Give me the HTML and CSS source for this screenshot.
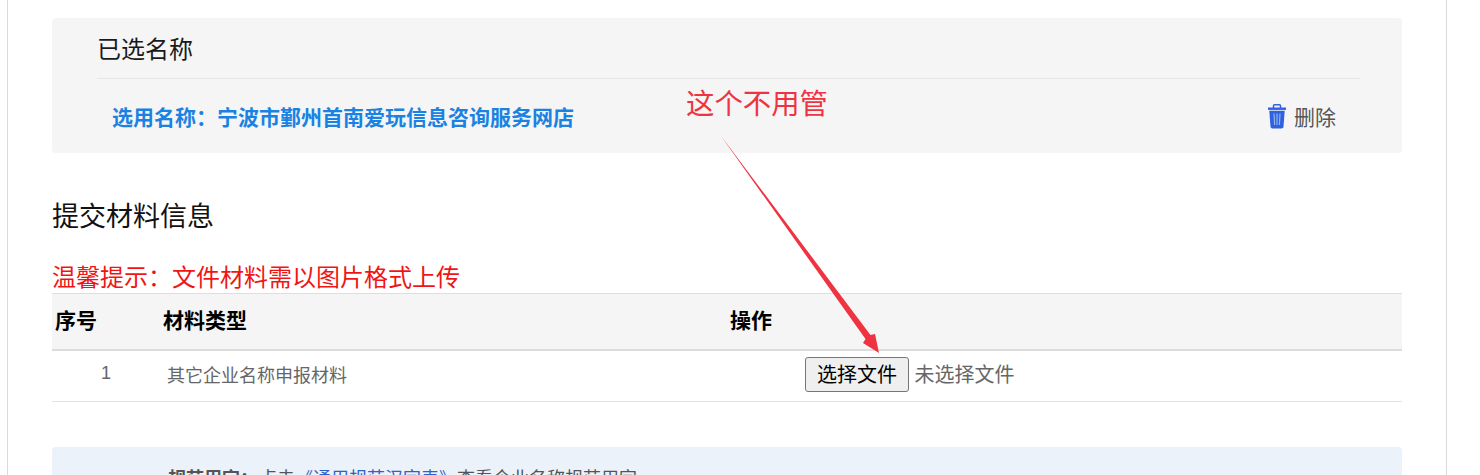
FILE: index.html
```html
<!DOCTYPE html>
<html lang="zh-CN">
<head>
  <meta charset="UTF-8" />
  <title>提交材料信息</title>
  <link rel="stylesheet" href="styles.css">
</head>
<body>
  <div class="container">
    <div class="selected-panel">
      <div class="selected-title">已选名称</div>
      <div class="selected-row">
        <span class="selected-name">选用名称：宁波市鄞州首南爱玩信息咨询服务网店</span>
        <a class="delete-link">
          <svg class="trash-icon" viewBox="0 0 20 25" width="20" height="25">
            <path d="M6.500 4V1.800C6.500 1.200 7 .8 7.500 .8h5c.5 0 1 .4 1 1V4" fill="none" stroke="#2f62e0" stroke-width="1.500"/>
            <path d="M1 3.500h18v2.400H1z" fill="#2f62e0"/>
            <path d="M2.300 6.800h15.400l-1.200 16c-.1 1-.9 1.700-1.900 1.700H5.400c-1 0-1.800-.7-1.900-1.700z" fill="#2f62e0"/>
            <path d="M7 9.500l.6 11.500M10 9.500V21M13 9.500L12.400 21" fill="none" stroke="#9db9f4" stroke-width="1.100"/>
          </svg>
          删除
        </a>
      </div>
    </div>

    <div class="section-title">提交材料信息</div>
    <div class="tip">温馨提示：文件材料需以图片格式上传</div>

    <table class="material-table">
      <thead>
        <tr>
          <th class="col-no">序号</th>
          <th class="col-type">材料类型</th>
          <th>操作</th>
        </tr>
      </thead>
      <tbody>
        <tr>
          <td class="cell-no">1</td>
          <td class="cell-type">其它企业名称申报材料</td>
          <td class="cell-action">
            <button class="file-btn" type="button">选择文件</button>
            <span class="file-empty">未选择文件</span>
          </td>
        </tr>
      </tbody>
    </table>

    <div class="notice">
      <b>规范用字：</b><span class="notice-text">点击<a class="notice-link">《通用规范汉字表》</a>查看企业名称规范用字</span>
    </div>
  </div>

  <div class="note">这个不用管</div>
  <svg class="note-arrow" width="1480" height="475" viewBox="0 0 1480 475">
    <path d="M721 136L870.500 335L875 334L879 353L863 343L865.500 339z" fill="#ef3340"/>
  </svg>
</body>
</html>
```

FILE: styles.css
```css
html, body {
  height: 100%;
  overflow: hidden;
}
body {
  margin: 0;
  padding: 0;
  background: #fff;
  color: #000;
  font-family: "Noto Sans CJK SC", "Liberation Sans", sans-serif;
}
.container {
  box-sizing: border-box;
  width: 1440px;
  height: 475px;
  margin-left: 7px;
  padding: 18px 44px 0 44px;
  border-left: 1px solid #d9d9d9;
  border-right: 1px solid #d9d9d9;
  overflow: hidden;
}
.selected-panel {
  height: 135px;
  box-sizing: border-box;
  padding: 0 42px 0 45px;
  background: #f5f5f5;
  border-radius: 4px;
}
.selected-title {
  height: 60px;
  line-height: 60px;
  font-size: 24px;
  color: #1a1a1a;
  border-bottom: 1px solid #e6e6e6;
}
.selected-row {
  display: flex;
  align-items: center;
  justify-content: space-between;
  height: 74px;
  padding: 0 24px 0 15px;
}
.selected-name {
  font-size: 21px;
  font-weight: 700;
  color: #1a82e2;
}
.delete-link {
  display: flex;
  align-items: center;
  gap: 7px;
  font-size: 21px;
  color: #555;
}
.trash-icon {
  display: block;
}
.section-title {
  margin-top: 42px;
  line-height: 40px;
  font-size: 27px;
  color: #111;
}
.tip {
  margin-top: 21px;
  line-height: 40px;
  height: 37px;
  font-size: 24px;
  color: #f01515;
}
.material-table {
  width: 1350px;
  border-collapse: collapse;
  table-layout: fixed;
}
.material-table th {
  height: 56px;
  padding: 0 0 4px;
  box-sizing: border-box;
  text-align: left;
  font-size: 21px;
  font-weight: 700;
  background: #f5f5f5;
  border-top: 1px solid #dedede;
  border-bottom: 2px solid #dcdcdc;
}
.material-table td {
  height: 52px;
  box-sizing: border-box;
  padding: 0;
  line-height: 1;
  border-bottom: 1px solid #e2e2e2;
}
.material-table .col-no {
  width: 111px;
  padding-left: 3px;
}
.col-type {
  width: 567px;
}
.material-table .cell-no {
  padding: 0 0 5px 49px;
  font-family: "Liberation Sans", sans-serif;
  font-size: 18px;
  color: #666;
}
.material-table .cell-type {
  padding: 0 0 3px 4px;
  font-size: 18px;
  color: #666;
}
.material-table .cell-action {
  padding: 0 0 3px 75px;
}
.file-btn {
  width: 104px;
  height: 35px;
  padding: 0;
  font-family: inherit;
  font-size: 20px;
  line-height: 1;
  color: #000;
  background: #efefef;
  border: 1px solid #767676;
  border-radius: 3px;
  vertical-align: middle;
}
.file-empty {
  margin-left: 2px;
  font-size: 20px;
  color: #666;
  vertical-align: middle;
}
.notice {
  height: 60px;
  margin-top: 45px;
  padding: 16px 0 0 116px;
  box-sizing: border-box;
  background: #ecf2f9;
  border-radius: 4px;
  font-size: 18px;
  line-height: 28px;
  color: #555;
}
.notice-text {
  margin-left: 1px;
}
.notice-link {
  color: #2f62c8;
}
.note {
  position: absolute;
  left: 686px;
  top: 82px;
  font-size: 28.400px;
  line-height: 40px;
  color: #ef3340;
}
.note-arrow {
  position: absolute;
  left: 0;
  top: 0;
  pointer-events: none;
}
```
